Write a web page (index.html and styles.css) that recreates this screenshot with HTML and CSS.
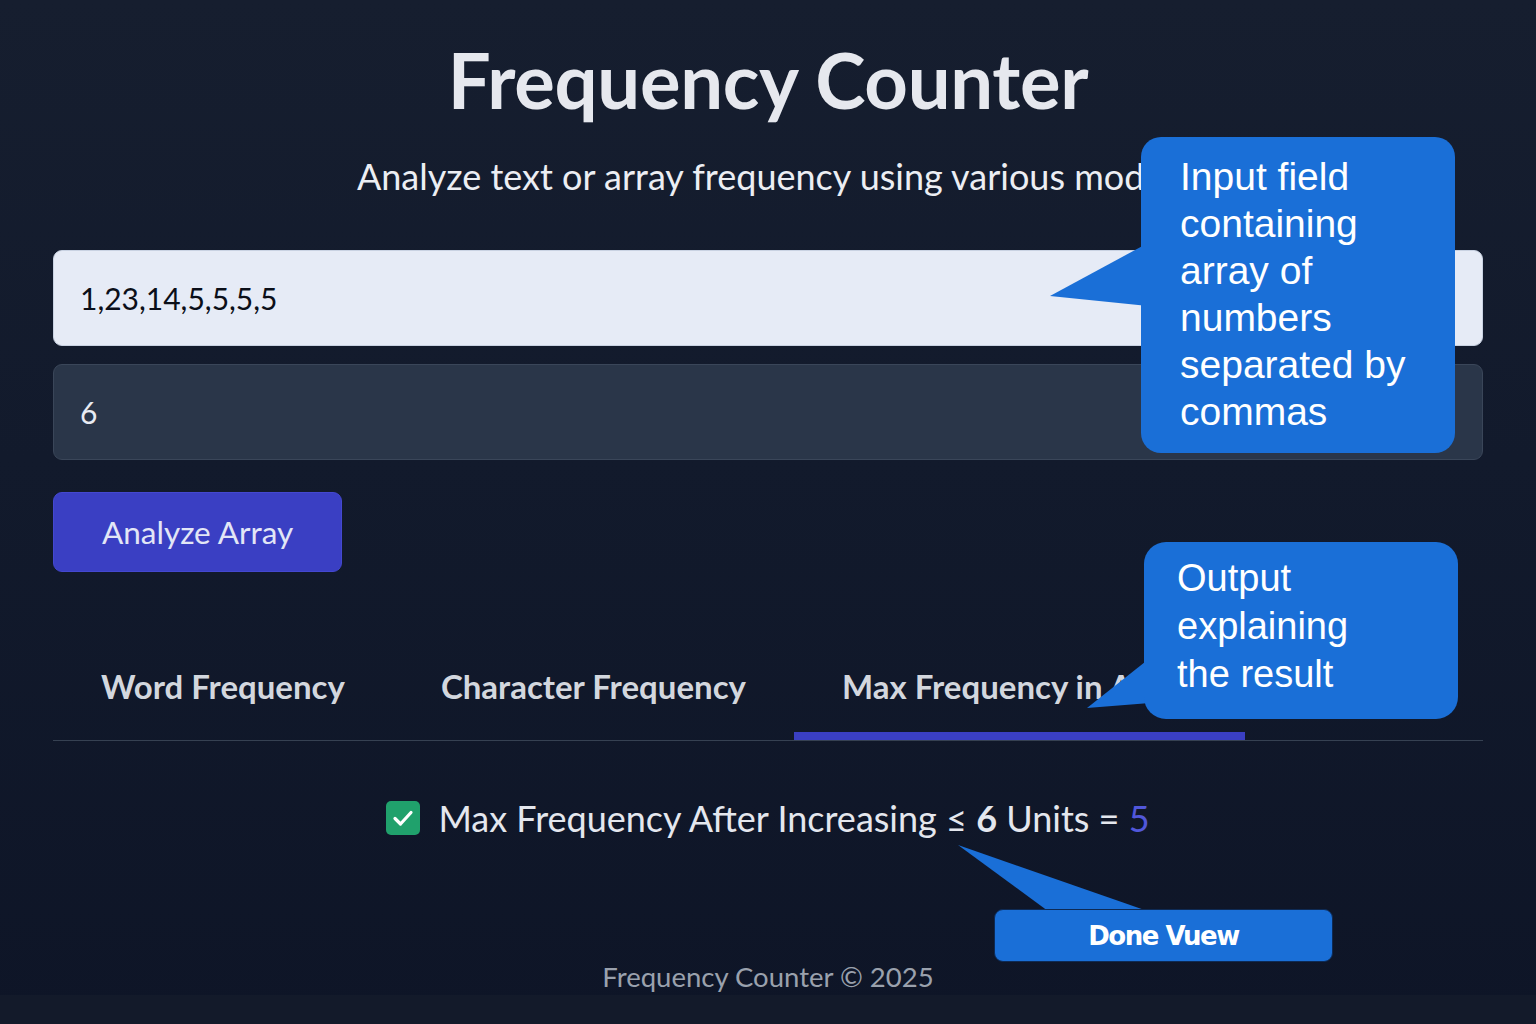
FILE: index.html
```html
<!DOCTYPE html>
<html lang="en">
<head>
<meta charset="utf-8">
<title>Frequency Counter</title>
<link rel="stylesheet" href="styles.css">
</head>
<body>
<div class="page">
  <main class="main">
    <h1 class="title">Frequency Counter</h1>
    <p class="subtitle">Analyze text or array frequency using various modes</p>
    <div class="fields">
      <input class="field field-light" type="text" value="1,23,14,5,5,5,5">
      <input class="field field-dark" type="text" value="6">
    </div>
    <button class="btn" type="button">Analyze Array</button>
    <nav class="tabs">
      <div class="tab">Word Frequency</div>
      <div class="tab">Character Frequency</div>
      <div class="tab tab-active">Max Frequency in Array</div>
    </nav>
    <div class="result">
      <svg class="check" width="34" height="34" viewBox="0 0 34 34" aria-hidden="true">
        <rect x="0" y="0" width="34" height="34" rx="5" fill="#20a16c"/>
        <path d="M9 17.5 L14.5 23 L25 11.5" fill="none" stroke="#ffffff" stroke-width="3.2" stroke-linecap="round" stroke-linejoin="round"/>
      </svg>
      <span class="result-text">Max Frequency After Increasing ≤ <b>6</b> Units = <span class="result-value">5</span></span>
    </div>
    <footer class="footer">Frequency Counter © 2025</footer>
  </main>
  <div class="bottom-strip"></div>

  <svg class="tails" width="1536" height="1024" viewBox="0 0 1536 1024" aria-hidden="true">
    <polygon points="1050,296 1148,243 1148,306" fill="#1a6fd7"/>
    <polygon points="1087,708 1150,658 1150,703" fill="#1a6fd7"/>
    <polygon points="958,845 1052,914 1156,914" fill="#1a6fd7"/>
  </svg>
  <div class="callout callout-input">Input field<br>containing<br>array of<br>numbers<br>separated by<br>commas</div>
  <div class="callout callout-output">Output<br>explaining<br>the result</div>
  <div class="callout callout-done">Done Vuew</div>
</div>
</body>
</html>
```

FILE: styles.css
```css
* { box-sizing: border-box; }

html, body {
  margin: 0;
  padding: 0;
}

body {
  background: #0f1628;
  font-family: Lato, "Noto Sans", "DejaVu Sans", sans-serif;
  color: #e5e7eb;
}

.page {
  position: relative;
  width: 1536px;
  height: 1024px;
  overflow: hidden;
  background: linear-gradient(180deg, #161e2f 0%, #121a2c 45%, #0e1527 100%);
}

.main {
  height: 995px;
  padding: 36px 53px 0 53px;
  display: flex;
  flex-direction: column;
}

.title {
  margin: 0;
  font-size: 76px;
  line-height: 88px;
  font-weight: 700;
  text-align: center;
  color: #e6e8ee;
  letter-spacing: -0.3px;
}

.subtitle {
  margin: 30px 0 0 0;
  font-size: 36px;
  line-height: 44px;
  text-align: center;
  color: #eceef3;
}

.fields {
  margin-top: 52px;
  display: flex;
  flex-direction: column;
  gap: 18px;
}

.field {
  display: block;
  width: 100%;
  height: 96px;
  padding: 0 26px;
  border-radius: 9px;
  font-family: Lato, "Noto Sans", sans-serif;
  font-size: 30px;
  outline: none;
}

.field-light {
  background: #e6ebf6;
  border: 1px solid #c9d2e2;
  color: #0b0f19;
}

.field-dark {
  background: #2a3649;
  border: 1px solid #3a4659;
  color: #e8ebf2;
}

.btn {
  align-self: flex-start;
  margin-top: 32px;
  height: 80px;
  padding: 0 48px;
  border: 1px solid #4448d0;
  border-radius: 9px;
  background: #3a3fc3;
  color: #e2e6f6;
  font-family: Lato, "Noto Sans", sans-serif;
  font-size: 31.5px;
}

.tabs {
  margin-top: 60px;
  display: flex;
  border-bottom: 1px solid #364152;
}

.tab {
  padding: 34px 48px 26px 48px;
  font-size: 33px;
  line-height: 40px;
  font-weight: 700;
  color: #d3d7de;
  border-bottom: 8px solid transparent;
  white-space: nowrap;
}

.tab-active {
  border-bottom-color: #3a3fc3;
  width: 451px;
  overflow: hidden;
}

.result {
  margin-top: 55px;
  display: flex;
  align-items: center;
  justify-content: center;
  gap: 18px;
  height: 44px;
}

.check {
  flex: none;
  display: block;
}

.result-text {
  font-size: 36px;
  line-height: 44px;
  color: #e4e7ee;
}

.result-text b {
  font-weight: 700;
}

.result-value {
  color: #5157da;
}

.footer {
  margin-top: 119px;
  font-size: 27.5px;
  line-height: 36px;
  text-align: center;
  color: #9aa1ad;
}

.bottom-strip {
  height: 29px;
  background: #131a2a;
}

/* Annotation overlays */
.tails {
  position: absolute;
  left: 0;
  top: 0;
  pointer-events: none;
}

.callout {
  position: absolute;
  background: #1a6fd7;
  color: #ffffff;
  font-family: "Liberation Sans", Arial, sans-serif;
}

.callout-input {
  left: 1141px;
  top: 137px;
  width: 314px;
  height: 316px;
  border-radius: 20px;
  padding: 16px 10px 0 39px;
  font-size: 39px;
  line-height: 47px;
}

.callout-output {
  left: 1144px;
  top: 542px;
  width: 314px;
  height: 177px;
  border-radius: 22px;
  padding: 12px 10px 0 33px;
  font-size: 38px;
  line-height: 48px;
}

.callout-done {
  left: 994px;
  top: 909px;
  width: 339px;
  height: 53px;
  border-radius: 9px;
  border: 1px solid #0d2a55;
  display: flex;
  align-items: center;
  justify-content: center;
  font-family: "DejaVu Sans", sans-serif;
  font-weight: 700;
  font-size: 26px;
  letter-spacing: -1.5px;
}
```
